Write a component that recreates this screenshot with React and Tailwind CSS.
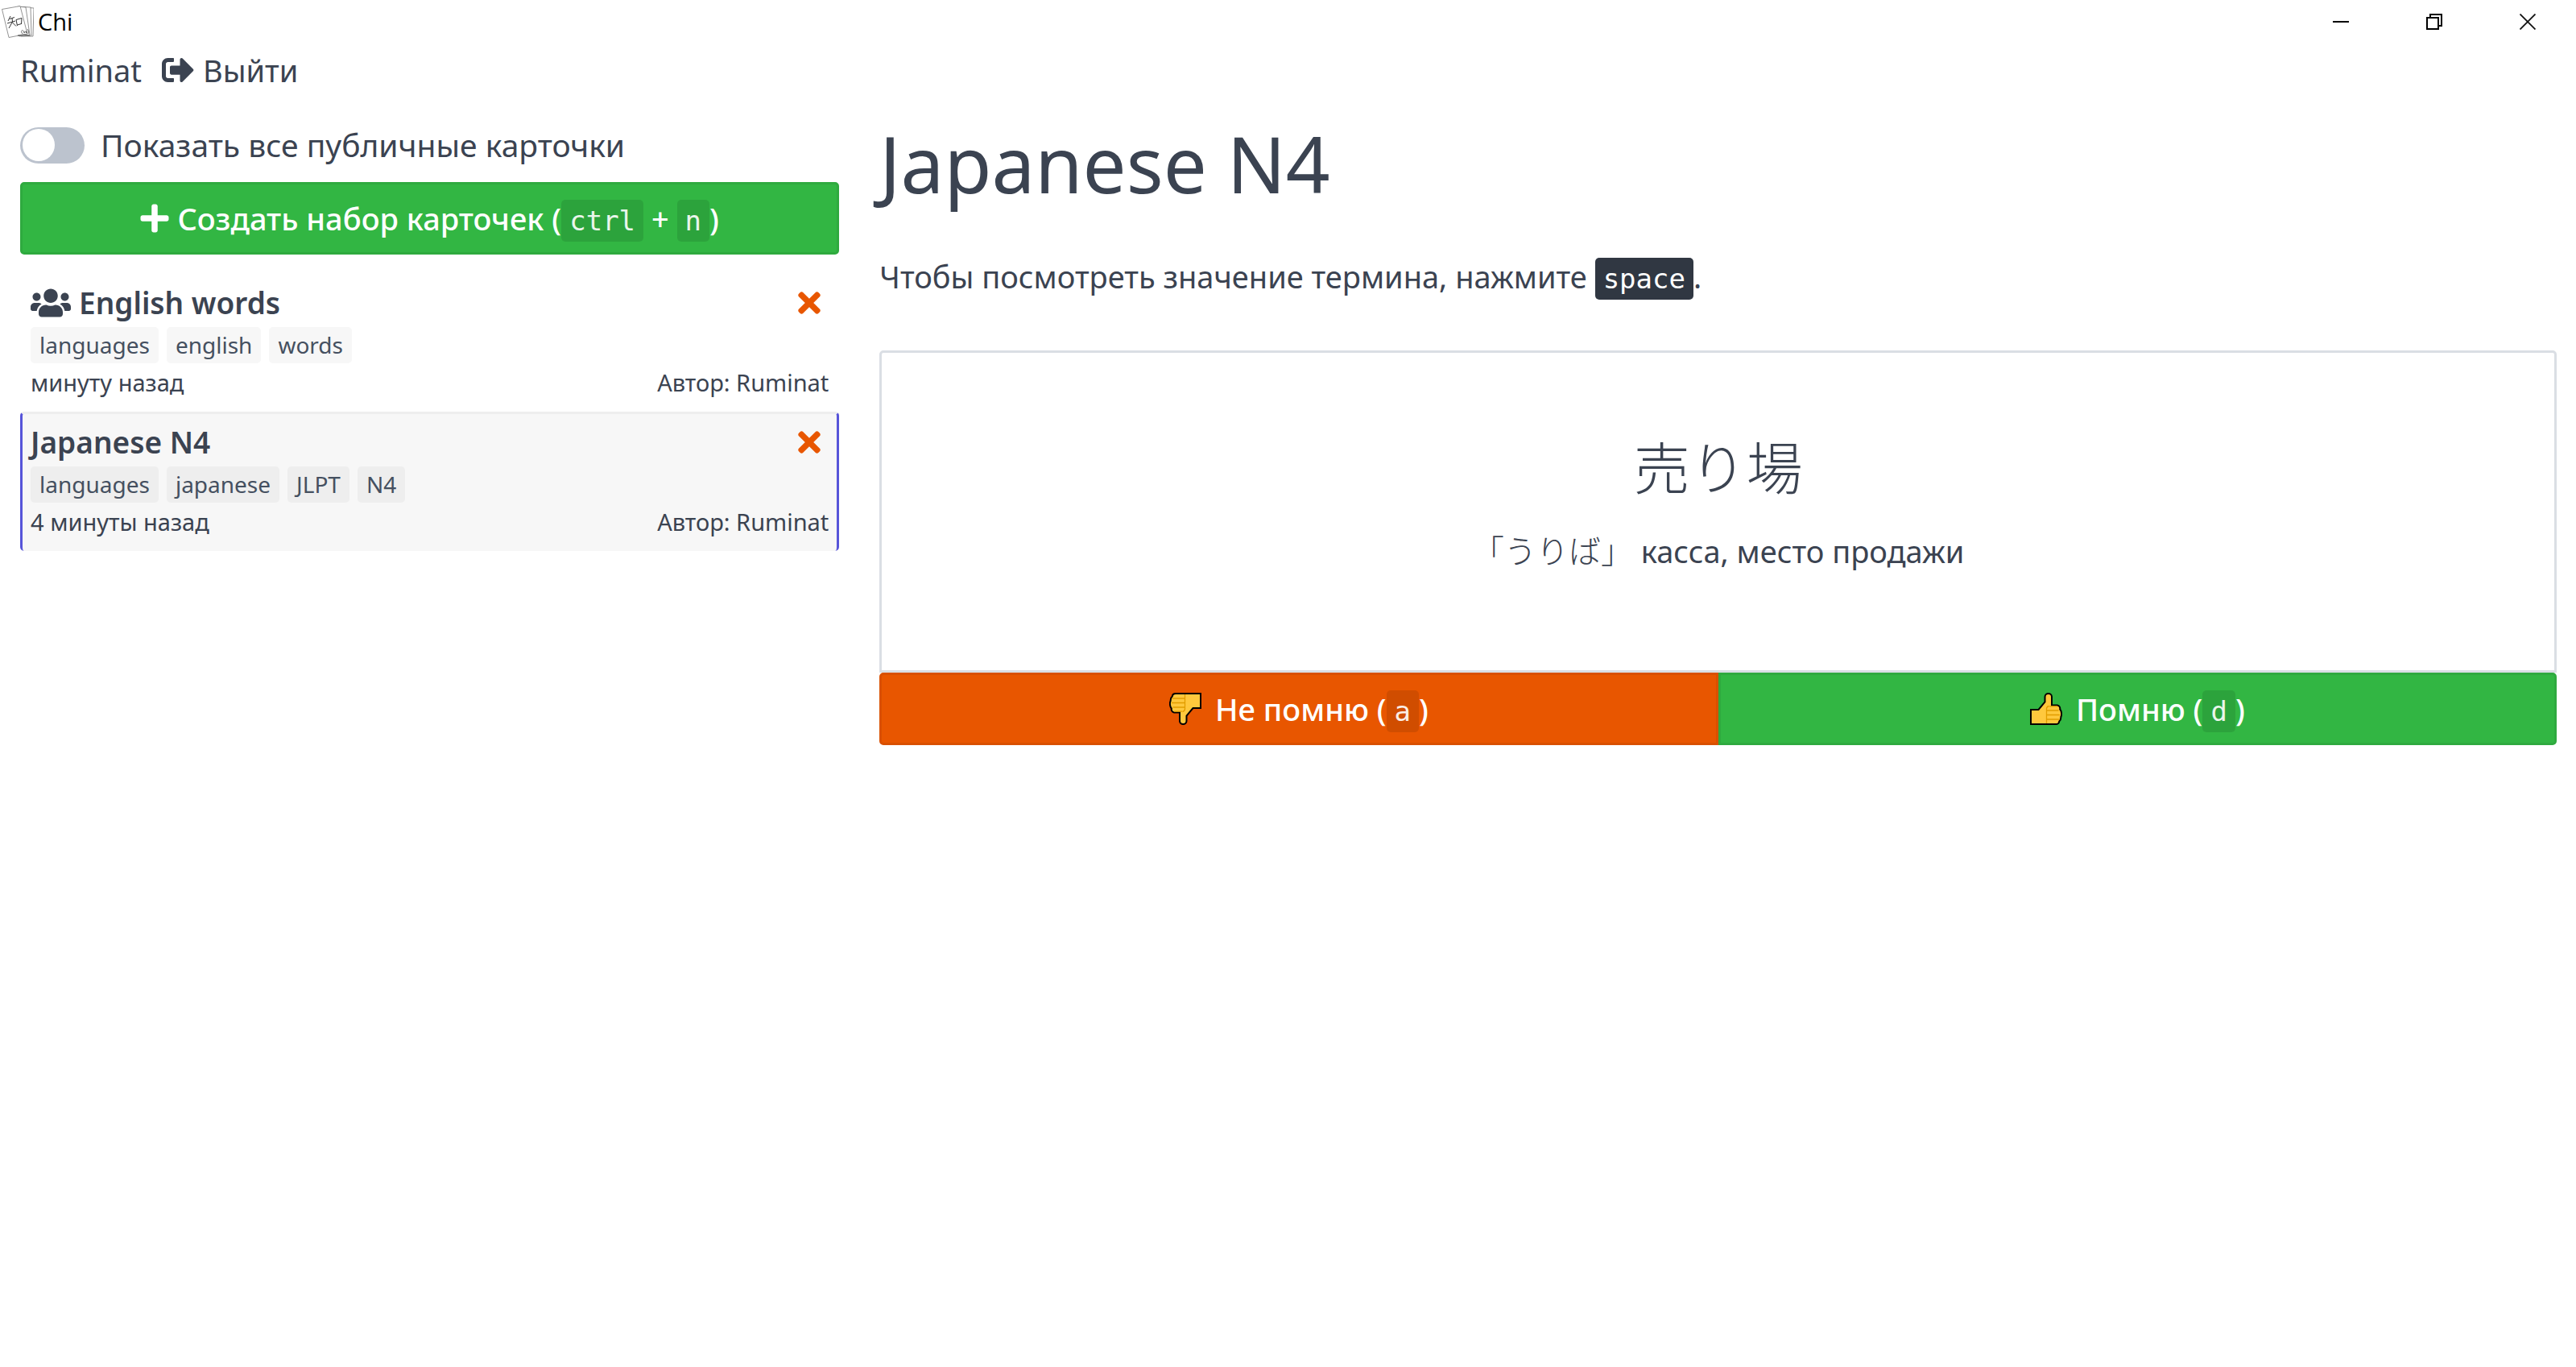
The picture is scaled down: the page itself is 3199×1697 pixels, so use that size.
import React from "react";
import { FaSignOutAlt, FaPlus, FaUsers, FaTimes } from "react-icons/fa";

const decks = [
  {
    title: "English words",
    shared: true,
    tags: ["languages", "english", "words"],
    date: "минуту назад",
    author: "Ruminat",
    active: false,
  },
  {
    title: "Japanese N4",
    shared: false,
    tags: ["languages", "japanese", "JLPT", "N4"],
    date: "4 минуты назад",
    author: "Ruminat",
    active: true,
  },
];

function AppLogo() {
  return (
    <svg className="size-10" viewBox="0 0 40 40" fill="#fff" stroke="#666" strokeWidth="0.7" aria-hidden="true">
      <path d="M27 2 L40 3 L39 38 L24 38 Z" />
      <path d="M24 1.500 L36 2 L37 37 L22 38 Z" />
      <path d="M20 1 L30 2 L35 36.500 L20 37.500 Z" />
      <path d="M0.500 4.500 L23 0.500 L32 35 L9 39.500 Z" />
      <g fill="none" stroke="#333" strokeWidth="1">
        <path d="M11 13 L8 19 M10 16.500 L16 14.500 M7 22 L17 19 M13 15.500 L13.500 20 L9 28 M13.500 21 L18 25.500" />
        <path d="M18 17.500 L19.500 25 M18 17.500 L25 15.500 L24.500 23 M19.500 24 L24.500 22.500" />
        <path d="M26 30 Q23 33 26 35 M27.500 31 L28 34 L29.500 32 L31 34 L31 31 M32 29 Q35 32 33 35 M20 37 Q28 35 35 37" strokeWidth="0.7" />
      </g>
    </svg>
  );
}

function Thumb({ down }) {
  return (
    <svg className={down ? "size-10 shrink-0 rotate-180" : "size-10 shrink-0"} viewBox="0 0 40 40" aria-hidden="true">
      <path
        d="M1 21 H10.500 L18.500 11.500 V5 C18.500 -0.300 27 -0.300 27 5 V15.500 H34 C37 16 37.500 19 37.200 20.500 C39.500 23 39.500 28 38.300 30 C38.500 33 37.500 34.500 36.200 35.500 C36 38 34.500 39 32 39 H1 Z"
        fill="#ffc83d"
        stroke="#000"
        strokeWidth="2"
      />
      <path
        d="M23.500 16.500 C21.500 17 20.500 18 20.500 20 V38 M20.500 22 H35.500 M21 27.500 H37 M21 33 H36.500 M34 16.800 H24"
        fill="none"
        stroke="#e19d00"
        strokeWidth="1.300"
      />
    </svg>
  );
}

function Key({ children, dark }) {
  return (
    <kbd
      className={
        "inline-block h-[52px] rounded-[5px] px-[10px] font-['DejaVu_Sans_Mono',monospace] text-[34px] font-normal leading-[52px] " +
        (dark ? "bg-[#303742] text-white" : "bg-black/10 text-white/90")
      }
    >
      {children}
    </kbd>
  );
}

function TitleBar() {
  return (
    <header className="flex h-[54px] items-center justify-between px-[2px] font-['Open_Sans',sans-serif] text-black">
      <div className="flex items-center gap-[5px]">
        <AppLogo />
        <span className="text-[29px] leading-10">Chi</span>
      </div>
      <div className="flex h-full">
        <button type="button" aria-label="Свернуть" className="flex w-[116px] items-center justify-center">
          <svg className="size-5" viewBox="0 0 20 20" stroke="#000" strokeWidth="2">
            <path d="M0 10H20" />
          </svg>
        </button>
        <button type="button" aria-label="Восстановить" className="flex w-[116px] items-center justify-center">
          <svg className="size-5" viewBox="0 0 20 20" fill="none" stroke="#000" strokeWidth="2">
            <path d="M1 5H15V19H1ZM5 5V1H19V15H15" />
          </svg>
        </button>
        <button type="button" aria-label="Закрыть" className="flex w-[116px] items-center justify-center">
          <svg className="size-5" viewBox="0 0 20 20" stroke="#111" strokeWidth="1.800">
            <path d="M0.500 0.500L19.500 19.500M19.500 0.500L0.500 19.500" />
          </svg>
        </button>
      </div>
    </header>
  );
}

function Deck({ deck }) {
  return (
    <li
      className={
        "rounded-[5px] border-x-[3px] border-t-[3px] px-[10px] pb-4 pt-[9px] " +
        (deck.active
          ? "border-x-[#5755d9] border-t-[#eeeeee] bg-[#f7f7f7]"
          : "border-transparent")
      }
    >
      <div className="flex h-[52px] items-center justify-between">
        <h2 className="flex items-center gap-[10px] text-[37px] font-semibold leading-[50px]">
          {deck.shared && <FaUsers className="h-10 w-[50px]" aria-hidden="true" />}
          {deck.title}
        </h2>
        <button type="button" aria-label="Удалить набор" className="mr-[10px] text-[#e85600]">
          <FaTimes className="h-10 w-[28px]" aria-hidden="true" />
        </button>
      </div>
      <ul className="mt-1 flex gap-[10px]">
        {deck.tags.map((tag) => (
          <li
            key={tag}
            className={
              "h-[45px] rounded-[5px] px-[11px] text-[28px] leading-[44px] text-[#455060] " +
              (deck.active ? "bg-[#eeeeee]" : "bg-[#f7f7f7]")
            }
          >
            {tag}
          </li>
        ))}
      </ul>
      <div className="mt-1 flex justify-between text-[29px] leading-[40px]">
        <span>{deck.date}</span>
        <span>Автор: {deck.author}</span>
      </div>
    </li>
  );
}

export default function App() {
  return (
    <div className="min-h-screen bg-white font-['Noto_Sans','Noto_Sans_CJK_JP',sans-serif] text-[38px] leading-[60px] text-[#3b4351]">
      <TitleBar />
      <nav className="flex h-[66px] items-center gap-[25px] px-[25px]">
        <a href="#profile">Ruminat</a>
        <a href="#logout" className="flex items-center gap-[11px]">
          <FaSignOutAlt className="size-10" aria-hidden="true" />
          Выйти
        </a>
      </nav>
      <main className="grid grid-cols-3">
        <aside className="pl-[25px] pr-6 pt-[30px]">
          <label className="flex h-[60px] items-center gap-[20px] text-[39px]">
            <input type="checkbox" className="peer sr-only" />
            <span className="flex h-[45px] w-20 shrink-0 items-center rounded-full bg-[#bcc3ce] px-[3px] peer-checked:justify-end peer-checked:bg-[#5755d9]">
              <span className="size-10 rounded-full bg-white" />
            </span>
            Показать все публичные карточки
          </label>
          <button
            type="button"
            className="mt-4 flex h-[90px] w-full items-center justify-center rounded-[5px] border-[3px] border-[#2faa3f] bg-[#32b643] font-medium text-white"
          >
            <FaPlus className="mr-[10px] h-10 w-[36px]" aria-hidden="true" />
            <span>
              Создать набор карточек (<Key>ctrl</Key> + <Key>n</Key>)
            </span>
          </button>
          <ul className="mt-[22px]">
            {decks.map((deck) => (
              <Deck key={deck.title} deck={deck} />
            ))}
          </ul>
        </aside>
        <section className="col-span-2 pl-[26px] pr-6 pt-[23px]">
          <h1 className="text-[96px] leading-[120px]">Japanese N4</h1>
          <p className="mt-[50px]">
            Чтобы посмотреть значение термина, нажмите <Key dark>space</Key>.
          </p>
          <article className="mt-[62px] flex h-[400px] flex-col items-center rounded-t-[5px] border-[3px] border-[#dadee4] pt-[98px]">
            <p lang="ja" className="font-['Noto_Sans_CJK_JP',sans-serif] text-[70px] font-light leading-[84px]">
              売り場
            </p>
            <p className="mt-[32px]">
              <span lang="ja" className="font-['Noto_Sans_CJK_JP',sans-serif] text-[40px] font-light">「うりば」</span> касса, место продажи
            </p>
          </article>
          <div className="grid grid-cols-2 font-medium text-white">
            <button
              type="button"
              className="flex h-[90px] items-center justify-center gap-[17px] rounded-l-[5px] border-[3px] border-[#d95000] bg-[#e85600]"
            >
              <Thumb down />
              <span>
                Не помню (<Key>a</Key>)
              </span>
            </button>
            <button
              type="button"
              className="flex h-[90px] items-center justify-center gap-[17px] rounded-r-[5px] border-[3px] border-[#2faa3f] bg-[#32b643]"
            >
              <Thumb />
              <span>
                Помню (<Key>d</Key>)
              </span>
            </button>
          </div>
        </section>
      </main>
    </div>
  );
}
